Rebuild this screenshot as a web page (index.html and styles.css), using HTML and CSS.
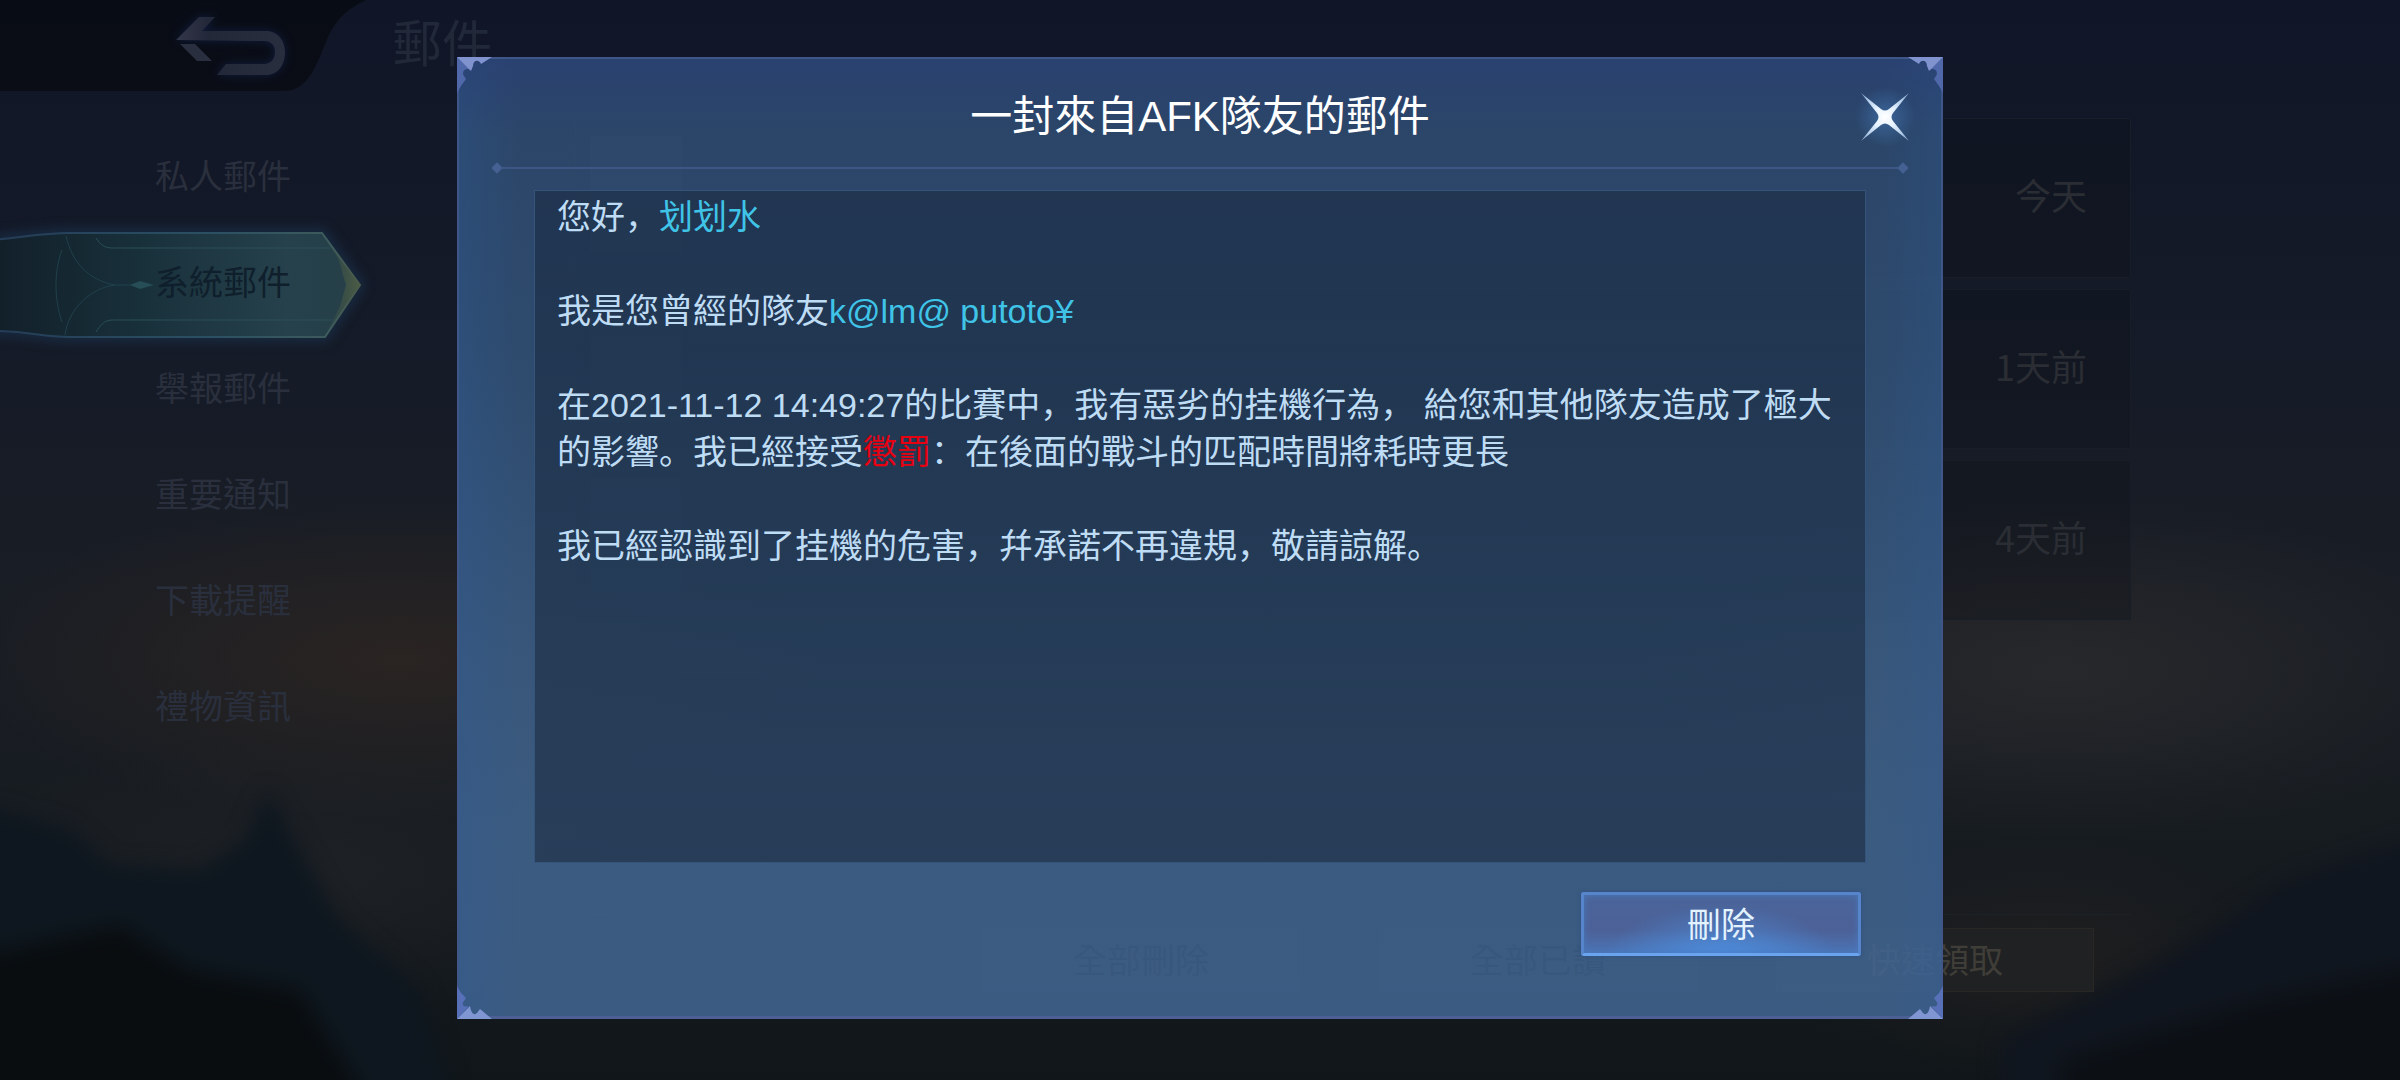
FILE: index.html
```html
<!DOCTYPE html>
<html lang="zh-Hant">
<head>
<meta charset="utf-8">
<meta name="viewport" content="width=device-width, initial-scale=1">
<title>郵件</title>
<link rel="stylesheet" href="styles.css">
</head>
<body>
<div class="page">
  <svg class="scenery" viewBox="0 0 2400 1080" preserveAspectRatio="none" aria-hidden="true">
    <defs>
      <filter id="soft" x="-10%" y="-10%" width="120%" height="120%" color-interpolation-filters="sRGB"><feGaussianBlur stdDeviation="10"/></filter>
      <radialGradient id="dusk"><stop offset="0" stop-color="#2a2422"/><stop offset="1" stop-color="#2a2422" stop-opacity="0"/></radialGradient>
      <radialGradient id="mist"><stop offset="0" stop-color="#27282b"/><stop offset="1" stop-color="#27282b" stop-opacity="0"/></radialGradient>
    </defs>
    <ellipse cx="400" cy="660" rx="440" ry="160" fill="url(#dusk)"/>
    <ellipse cx="300" cy="880" rx="360" ry="140" fill="url(#mist)" opacity=".5"/>
    <ellipse cx="2060" cy="670" rx="440" ry="170" fill="url(#mist)"/>
    <ellipse cx="2040" cy="960" rx="280" ry="120" fill="url(#dusk)" opacity=".5"/>
    <g filter="url(#soft)">
      <path d="M-40 800L70 830 110 865 200 870 245 840 268 790 300 850 340 920 420 990 460 1120H-40Z" fill="#0e171f"/>
      <path d="M-40 960L120 925 190 970 300 990 380 1120H-40Z" fill="#090d10"/>
      <path d="M2000 1040L2160 960 2290 880 2440 830V1120H2000Z" fill="#10161f"/>
      <path d="M2060 1060L2260 1000 2440 960V1120H2060Z" fill="#0c1015"/>
    </g>
  </svg>

  <header class="topbar">
    <button class="back" type="button" aria-label="返回">
      <svg viewBox="0 0 366 91" aria-hidden="true">
        <defs>
          <linearGradient id="tab" x1="0" y1="0" x2="0" y2="1"><stop offset="0" stop-color="#080c15"/><stop offset="1" stop-color="#0a0d16"/></linearGradient>
          <linearGradient id="arrow" x1="0" y1="0" x2="1" y2="0"><stop offset="0" stop-color="#323649"/><stop offset=".3" stop-color="#232839"/><stop offset="1" stop-color="#282e3e"/></linearGradient>
          <filter id="halo" x="-30%" y="-30%" width="160%" height="160%" color-interpolation-filters="sRGB"><feGaussianBlur stdDeviation="5"/></filter>
        </defs>
        <path d="M0 0H366C345 10 334 22 326 42C316 66 308 91 284 91H0Z" fill="url(#tab)"/>
        <path d="M176 40L199 17H215L202 31H266C278 31 285 41 285 52C285 65 278 75 266 75H217L226 64H264C271 64 275 59 275 52C275 45 271 41 264 41Z" fill="#14224a" opacity=".8" filter="url(#halo)"/>
        <path d="M176 40L199 17H215L202 31H266C278 31 285 41 285 52C285 65 278 75 266 75H217L226 64H264C271 64 275 59 275 52C275 45 271 41 264 41Z" fill="url(#arrow)"/>
        <path d="M180 44H195L212 61H197Z" fill="#2a2f40"/>
      </svg>
    </button>
    <h1 class="page-title">郵件</h1>
  </header>

  <div class="columns">
    <nav class="tabs" aria-label="郵件分類">
      <button class="tab" type="button">私人郵件</button>
      <button class="tab tab-active" type="button" aria-current="true">
        <svg class="tab-shape" viewBox="0 0 366 108" aria-hidden="true">
          <defs>
            <linearGradient id="tabFill" x1="0" y1="0" x2="1" y2="0"><stop offset="0" stop-color="#121f29"/><stop offset=".4" stop-color="#18303a"/><stop offset=".8" stop-color="#26414c"/><stop offset="1" stop-color="#263f48"/></linearGradient>
            <linearGradient id="tabEdge" x1="0" y1="0" x2="1" y2="0"><stop offset="0" stop-color="#243c57"/><stop offset=".6" stop-color="#2b5063"/><stop offset=".92" stop-color="#3e5b5c"/><stop offset="1" stop-color="#4a5b48"/></linearGradient>
            <linearGradient id="tip" x1="0" y1="0" x2="1" y2="0"><stop offset="0" stop-color="#435645" stop-opacity="0"/><stop offset="1" stop-color="#4c5c44"/></linearGradient>
            <filter id="tabGlow" x="-10%" y="-20%" width="120%" height="140%" color-interpolation-filters="sRGB"><feGaussianBlur stdDeviation="6"/></filter>
          </defs>
          <path d="M-8 10C20 8 40 3 70 3H322L360 55 325 107H70C40 107 30 101 -8 101" fill="none" stroke="#1b3350" stroke-width="7" filter="url(#tabGlow)"/>
          <path d="M-8 10C20 8 40 3 70 3H322L360 55 325 107H70C40 107 30 101 -8 101Z" fill="url(#tabFill)"/>
          <path d="M322 4L360 55 325 106 340 76 346 55 338 28Z" fill="url(#tip)"/>
          <path d="M66 6C72 32 88 50 115 55H132M115 55C90 58 68 80 65 105M62 20C54 40 54 70 62 92" fill="none" stroke="#20414b" stroke-width="1"/>
          <path d="M96 8C100 14 104 18 112 18H330M96 102C100 96 104 90 112 90H334" fill="none" stroke="#2b4f59" stroke-width="1"/>
          <path d="M130 55L140 51 154 55 140 59Z" fill="#274d57"/>
          <path d="M-8 10C20 8 40 3 70 3H322L360 55 325 107H70C40 107 30 101 -8 101" fill="none" stroke="url(#tabEdge)" stroke-width="2"/>
        </svg>
        <span class="tab-label">系統郵件</span>
      </button>
      <button class="tab" type="button">舉報郵件</button>
      <button class="tab" type="button">重要通知</button>
      <button class="tab" type="button">下載提醒</button>
      <button class="tab" type="button">禮物資訊</button>
    </nav>

    <main class="inbox">
      <ul class="mails">
        <li class="mail"><span class="thumb"></span><time class="age">今天</time></li>
        <li class="mail"><span class="thumb"></span><time class="age">1天前</time></li>
        <li class="mail"><span class="thumb"></span><time class="age">4天前</time></li>
      </ul>
      <div class="bulk">
        <button class="bulk-button" type="button">全部刪除</button>
        <button class="bulk-button" type="button">全部已讀</button>
        <button class="bulk-button bulk-claim" type="button">快速領取</button>
      </div>
    </main>
  </div>
</div>

<div class="overlay">
  <section class="dialog" role="dialog" aria-modal="true" aria-labelledby="dialog-title">
    <svg class="corner corner-tl" viewBox="0 0 36 36" aria-hidden="true"><path d="M0 0L14 13C9 10 4 14 7 19L9 22 4 29 0 36Z" fill="#5067aa"/><path d="M0 0H35L24 7C22 2 16 3 16 9L14 14Z" fill="#8093cf"/></svg>
    <svg class="corner corner-tr" viewBox="0 0 36 36" aria-hidden="true"><path d="M0 0L14 13C9 10 4 14 7 19L9 22 4 29 0 36Z" fill="#5067aa"/><path d="M0 0H35L24 7C22 2 16 3 16 9L14 14Z" fill="#8093cf"/></svg>
    <svg class="corner corner-bl" viewBox="0 0 36 36" aria-hidden="true"><path d="M0 0L12 13C6 11 4 15 7 18L9 21 4 26 0 33Z" fill="#5870b8"/><path d="M0 0H35L23 10 20 6C17 3 14 6 13 13Z" fill="#7f96d2"/></svg>
    <svg class="corner corner-br" viewBox="0 0 36 36" aria-hidden="true"><path d="M0 0L12 13C6 11 4 15 7 18L9 21 4 26 0 33Z" fill="#5870b8"/><path d="M0 0H35L23 10 20 6C17 3 14 6 13 13Z" fill="#7f96d2"/></svg>

    <header class="dialog-head">
      <h2 class="dialog-title" id="dialog-title">一封來自AFK隊友的郵件</h2>
      <button class="close" type="button" aria-label="關閉">
        <svg viewBox="15 15 40 40" aria-hidden="true">
          <defs>
            <radialGradient id="star" gradientUnits="userSpaceOnUse" cx="35" cy="35" r="33"><stop offset="0" stop-color="#fff"/><stop offset=".35" stop-color="#e6f2ff"/><stop offset=".7" stop-color="#b3cdea"/><stop offset="1" stop-color="#7f9fc6"/></radialGradient>
            <radialGradient id="starGlow"><stop offset="0" stop-color="#4a86c8" stop-opacity=".5"/><stop offset="1" stop-color="#4a86c8" stop-opacity="0"/></radialGradient>
          </defs>
          <circle cx="35" cy="35" r="30" fill="url(#starGlow)"/>
          <path d="M11 11L31 27Q35 30 39 27L59 11 43 31Q40 35 43 39L59 59 39 43Q35 40 31 43L11 59 27 39Q30 35 27 31Z" fill="url(#star)"/>
        </svg>
      </button>
    </header>

    <article class="letter" lang="zh-Hans">
      <p>您好，<span class="name">划划水</span></p>
      <p>我是您曾經的隊友<span class="name">k@lm@ putoto¥</span></p>
      <p>在2021-11-12 14:49:27的比賽中，我有惡劣的挂機行為， 給您和其他隊友造成了極大的影響。我已經接受<span class="penalty">懲罰</span>：在後面的戰斗的匹配時間將耗時更長</p>
      <p>我已經認識到了挂機的危害，幷承諾不再違規，敬請諒解。</p>
    </article>

    <footer class="dialog-foot">
      <button class="delete" type="button">刪除</button>
    </footer>
  </section>
</div>
</body>
</html>
```

FILE: styles.css
```css
* {
  box-sizing: border-box;
}

body {
  margin: 0;
  min-height: 100vh;
  background: #10171c;
  color: #bfdcf5;
  font-family: "Liberation Sans", "Noto Sans CJK SC", sans-serif;
}

button {
  margin: 0;
  padding: 0;
  border: 0;
  background: none;
  color: inherit;
  font: inherit;
  cursor: pointer;
}

/* Dimmed mail page */
.page {
  position: relative;
  min-height: 100vh;
  overflow: hidden;
  background: linear-gradient(#101627, #121827 15%, #151b27 35%, #191d24 55%, #171c21 75%, #101619);
  font-family: "Noto Sans CJK SC", sans-serif;
}

.scenery {
  position: absolute;
  inset: 0;
  width: 100%;
  height: 100%;
}

.topbar {
  position: relative;
  display: flex;
  gap: 26px;
  height: 91px;
}

.back {
  width: 366px;
  height: 91px;
}

.back svg {
  display: block;
}

.page-title {
  margin: 0;
  color: #212938;
  font-size: 50px;
  font-weight: 400;
  line-height: 80px;
}

.columns {
  position: relative;
  display: flex;
  justify-content: space-between;
}

.tabs {
  display: flex;
  flex-direction: column;
  width: 366px;
  padding-top: 30px;
}

.tab {
  position: relative;
  height: 106px;
  padding-left: 155px;
  color: #2a2f3d;
  font-size: 34px;
  text-align: left;
}

.tab-active {
  color: #0f1f2c;
}

.tab-shape {
  position: absolute;
  top: 3px;
  left: 0;
  width: 366px;
  height: 108px;
  overflow: visible;
}

.tab-label {
  position: relative;
}

.inbox {
  flex: 1;
  margin: 27px 269px 0 209px;
}

.mails {
  display: flex;
  flex-direction: column;
  gap: 11px;
  min-height: 797px;
  margin: 0;
  padding: 0;
  border-bottom: 1px solid #1c2027;
  list-style: none;
}

.mail {
  display: flex;
  align-items: center;
  justify-content: space-between;
  height: 160px;
  padding: 0 43px 8px 14px;
  border: 1px solid #181e28;
  border-radius: 2px;
  background: rgba(12, 16, 24, .3);
}

.thumb {
  width: 92px;
  height: 116px;
  background: #1b232d;
}

.age {
  color: #2a2d33;
  font-size: 36px;
}

.bulk {
  display: flex;
  justify-content: flex-end;
  gap: 79px;
  padding: 13px 37px 0 0;
}

.bulk-button {
  width: 318px;
  height: 64px;
  padding-bottom: 4px;
  border: 1px solid #1c2126;
  background: #191e23;
  color: #000;
  font-size: 34px;
}

.bulk-claim {
  border-color: #292723;
  background: #202122;
  color: #3f3d38;
}

/* Letter dialog */
.overlay {
  position: absolute;
  inset: 0;
  display: flex;
  align-items: flex-start;
  justify-content: center;
  padding: 57px 16px 60px;
}

.dialog {
  position: relative;
  width: 1486px;
  max-width: 100%;
  padding-bottom: 60px;
  border: 2px solid #3e5788;
  border-bottom: 3px solid #4c6096;
  background:
    linear-gradient(rgba(40, 62, 120, .5), rgba(40, 62, 120, 0) 8%),
    linear-gradient(90deg, rgba(45, 90, 150, .3), rgba(45, 90, 150, 0) 4%, rgba(45, 90, 150, 0) 96%, rgba(45, 90, 150, .25)),
    linear-gradient(rgba(47, 76, 114, .86), rgba(50, 82, 120, .86) 30%, rgba(58, 94, 135, .86) 60%, rgba(65, 101, 143, .86) 80%, rgba(66, 102, 146, .86));
  background-clip: padding-box;
}

.corner {
  position: absolute;
  width: 36px;
  height: 36px;
}

.corner-tl {
  top: -2px;
  left: -2px;
}

.corner-tr {
  top: -2px;
  right: -2px;
  transform: scaleX(-1);
}

.corner-bl {
  bottom: -3px;
  left: -2px;
  transform: scaleY(-1);
}

.corner-br {
  right: -2px;
  bottom: -3px;
  transform: scale(-1);
}

.dialog-head {
  position: relative;
  display: grid;
  grid-template-columns: 40px 1fr 40px;
  align-items: center;
  margin: 0 36px;
  height: 110px;
  padding-top: 8px;
  border-bottom: 2px solid #3c5685;
}

.dialog-head::before,
.dialog-head::after {
  content: "";
  position: absolute;
  bottom: -5px;
  width: 8px;
  height: 8px;
  background: #456093;
  transform: rotate(45deg);
}

.dialog-head::before {
  left: -2px;
}

.dialog-head::after {
  right: -2px;
}

.dialog-title {
  grid-column: 2;
  margin: 0;
  color: #fff;
  font-size: 42px;
  font-weight: 400;
  line-height: 60px;
  text-align: center;
}

.close {
  width: 40px;
  height: 40px;
}

.close svg {
  display: block;
  overflow: visible;
}

.letter {
  display: flex;
  flex-direction: column;
  gap: 47px;
  min-height: 673px;
  margin: 21px 75px 0;
  padding: 3px 22px;
  border: 1px solid #35547b;
  background: linear-gradient(rgba(0, 4, 12, .26), rgba(0, 4, 12, .34));
  background-clip: padding-box;
  font-size: 34px;
  line-height: 47px;
}

.letter p {
  margin: 0;
}

.name {
  color: #3fc4e8;
}

.penalty {
  color: #e60012;
}

.dialog-foot {
  display: flex;
  justify-content: flex-end;
  padding: 29px 80px 0 0;
}

.delete {
  width: 280px;
  height: 64px;
  padding-bottom: 4px;
  border: 3px solid #5685cc;
  border-bottom-color: #6aa4ee;
  border-radius: 3px;
  background:
    radial-gradient(ellipse at 50% 110%, rgba(78, 150, 235, .8), rgba(78, 140, 220, 0) 60%),
    linear-gradient(#4a659b, #4c6197 60%, #4b74b5);
  box-shadow: 0 0 4px #2c4f83, inset 0 0 6px #4a78bd;
  color: #e2f3ff;
  font-size: 34px;
}
```
